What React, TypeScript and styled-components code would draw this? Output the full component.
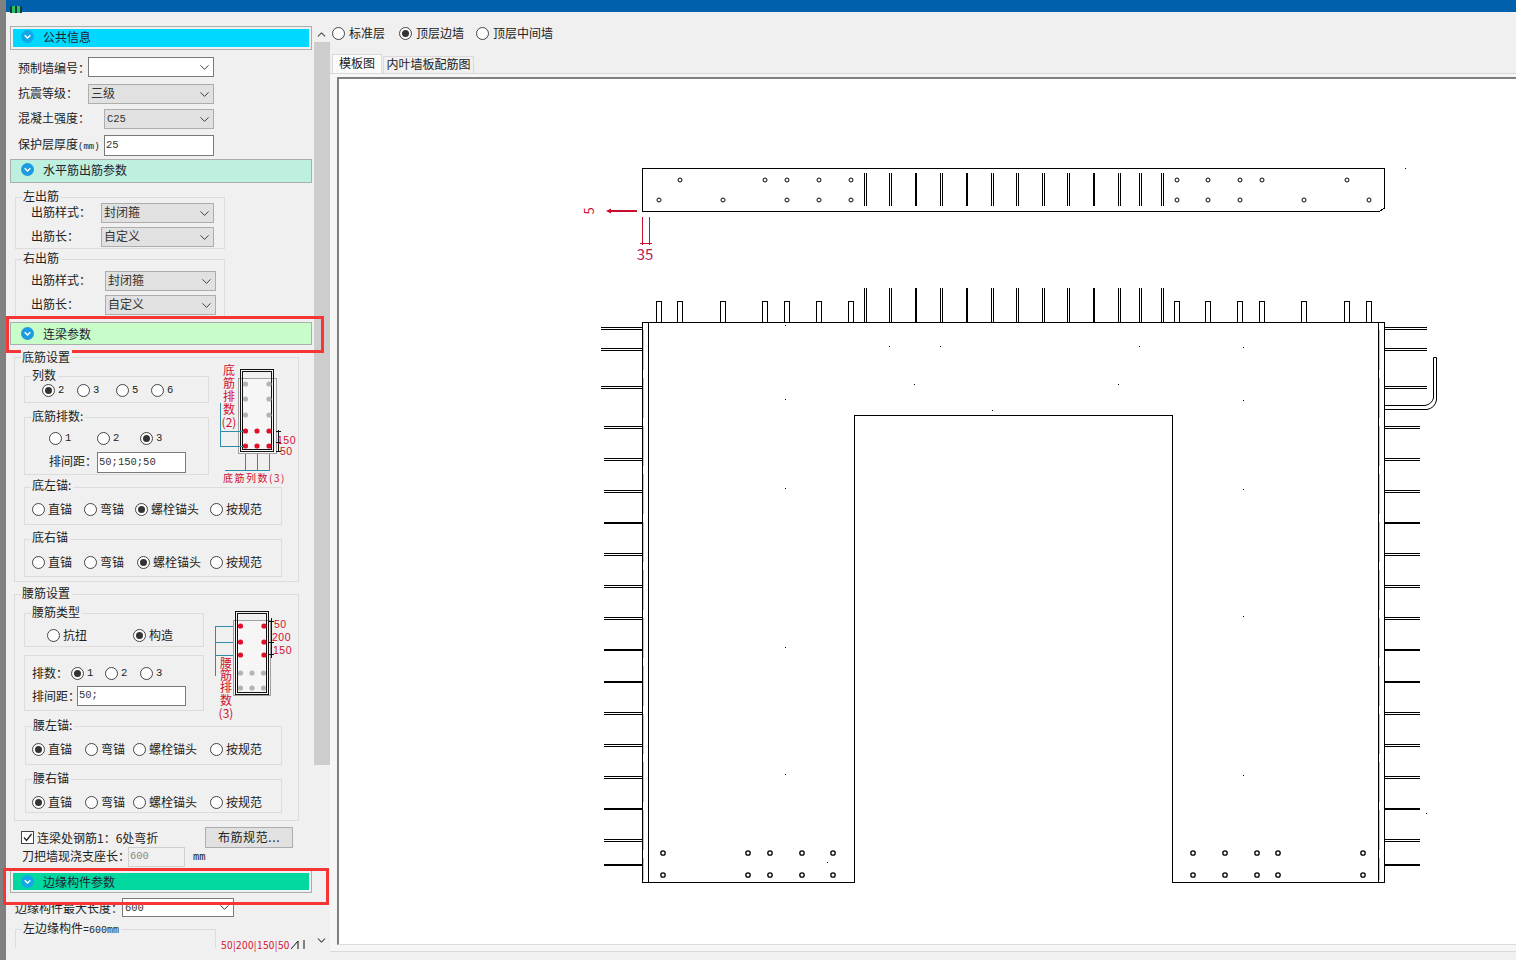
import React from 'react'
import styled, { createGlobalStyle } from 'styled-components'
import { ChevronDown, ChevronUp } from 'lucide-react'

const GlobalStyle = createGlobalStyle`
  html, body { margin: 0; padding: 0; background: #f0f0f0; }
  body { font-family: "Noto Sans CJK SC", "Liberation Sans", sans-serif; font-size: 12px; color: #222; }
`

const Page = styled.div`
  width: 1516px;
  height: 960px;
  overflow: hidden;
  display: flex;
  flex-direction: column;
`
const TitleBar = styled.div`
  height: 12px;
  flex: none;
  background: #0060ac;
  padding-left: 10px;
  box-sizing: border-box;
`
const Main = styled.div`
  flex: 1;
  display: flex;
  min-height: 0;
`
const LeftEdge = styled.div`
  width: 6px;
  flex: none;
  background: #808080;
  margin-top: -12px;
`
const Side = styled.div`
  width: 308px;
  height: 938px;
  flex: none;
  padding-top: 14px;
  box-sizing: border-box;
`
const Scroll = styled.div`
  width: 16px;
  flex: none;
  margin-top: 14px;
  height: 922px;
  display: flex;
  flex-direction: column;
  align-items: center;
  color: #505050;
`
const ScrollButton = styled.div`
  height: 16px;
  flex: none;
  display: flex;
  align-items: center;
  justify-content: center;
  padding-right: 2px;
`
const ScrollThumb = styled.div`
  width: 16px;
  height: 723px;
  flex: none;
  background: #cdcdcd;
`
const ScrollRest = styled.div`
  flex: 1;
`

const Header = styled.div<{ $gap?: boolean; $top?: number; $h?: number }>`
  position: relative;
  height: ${p => p.$h ?? 23}px;
  margin: ${p => p.$top ?? 0}px 2px 0 4px;
  box-sizing: border-box;
  border: 1px solid #a9afaf;
  padding: ${p => (p.$gap ? '2px' : '0')};
`
const HeaderBody = styled.div<{ $fill: string; $gap?: boolean; $lift?: number }>`
  height: 100%;
  box-sizing: border-box;
  background: ${p => p.$fill};
  display: flex;
  align-items: center;
  gap: 9px;
  padding-left: ${p => (p.$gap ? 8 : 10)}px;
  padding-bottom: ${p => p.$lift ?? 0}px;
  color: #223;
`
const HeaderIcon = styled.svg`
  width: 13px;
  height: 13px;
  flex: none;
`
const RedBox = styled.div<{ $l: number; $r: number; $t: number; $b: number }>`
  position: absolute;
  left: ${p => p.$l}px;
  right: ${p => p.$r}px;
  top: ${p => p.$t}px;
  bottom: ${p => p.$b}px;
  border: 3px solid #f73535;
  pointer-events: none;
`

const Field = styled.div<{ $top?: number; $left?: number; $h?: number }>`
  display: flex;
  align-items: center;
  height: ${p => p.$h ?? 20}px;
  margin-top: ${p => p.$top ?? 0}px;
  padding-left: ${p => p.$left ?? 0}px;
`
const Label = styled.div<{ $w: number; $lift?: number }>`
  width: ${p => p.$w}px;
  flex: none;
  white-space: nowrap;
  padding-bottom: ${p => (p.$lift ?? 2) * 2}px;
`
const SmallUnit = styled.span<{ $size?: number }>`
  font-family: "Liberation Mono", monospace;
  font-size: ${p => p.$size ?? 9}px;
`
const SelectBox = styled.div<{ $w: number; $h?: number; $white?: boolean }>`
  width: ${p => p.$w}px;
  height: ${p => p.$h ?? 20}px;
  flex: none;
  box-sizing: border-box;
  border: 1px solid ${p => (p.$white ? '#7a7a7a' : '#adadad')};
  background: ${p => (p.$white ? '#fff' : '#e1e1e1')};
  display: flex;
  align-items: center;
  justify-content: space-between;
  padding: 0 1px 0 2px;
  color: #333;
`
const SelectText = styled.span`
  padding-bottom: 2px;
  line-height: 16px;
`
const LatinValue = styled.span`
  font-family: "Liberation Mono", monospace;
  font-size: 10.5px;
`
const TextInput = styled.div<{ $w: number; $h?: number; $disabled?: boolean }>`
  width: ${p => p.$w}px;
  height: ${p => p.$h ?? 20}px;
  flex: none;
  box-sizing: border-box;
  border: 1px solid ${p => (p.$disabled ? '#d0d0d0' : '#7a7a7a')};
  background: ${p => (p.$disabled ? '#f0f0f0' : '#fff')};
  color: ${p => (p.$disabled ? '#8a8a8a' : '#333')};
  display: flex;
  align-items: center;
  padding: 0 0 2px 1px;
  font-family: "Liberation Mono", monospace;
  font-size: 10.5px;
`

const Group = styled.div<{ $top: number; $left: number; $w: number; $h: number; $pad?: number; $padLeft?: number; $open?: boolean }>`
  position: relative;
  margin-top: ${p => p.$top}px;
  margin-left: ${p => p.$left}px;
  width: ${p => p.$w}px;
  height: ${p => p.$h}px;
  flex: none;
  box-sizing: border-box;
  border: 1px solid #dcdcdc;
  border-bottom-width: ${p => (p.$open ? 0 : 1)}px;
  padding-top: ${p => p.$pad ?? 0}px;
  padding-left: ${p => p.$padLeft ?? 0}px;
`
const Legend = styled.div<{ $up?: number }>`
  position: absolute;
  left: 6px;
  top: -${p => p.$up ?? 10}px;
  padding: 0 2px 0 1px;
  background: #f0f0f0;
  line-height: 16px;
  height: 15px;
  white-space: nowrap;
`
const RadioRow = styled.div<{ $cols: string; $left?: number; $top?: number }>`
  display: grid;
  grid-template-columns: ${p => p.$cols};
  padding-left: ${p => p.$left ?? 0}px;
  margin-top: ${p => p.$top ?? 0}px;
  height: 14px;
  align-items: center;
`
const RadioLabel = styled.div<{ $gap?: number }>`
  display: flex;
  align-items: center;
  gap: ${p => p.$gap ?? 3}px;
  white-space: nowrap;
  line-height: 14px;
`
const RadioCircle = styled.span<{ $on?: boolean }>`
  width: 13px;
  height: 13px;
  flex: none;
  box-sizing: border-box;
  border-radius: 50%;
  border: 1px solid #444;
  background: #fff;
  display: flex;
  align-items: center;
  justify-content: center;
  &::after {
    content: '';
    display: ${p => (p.$on ? 'block' : 'none')};
    width: 7px;
    height: 7px;
    border-radius: 50%;
    background: #333;
  }
`
const Num = styled.span`
  font-family: "Liberation Mono", monospace;
  font-size: 10.5px;
`
const DiagramRow = styled.div<{ $h: number; $gap: number }>`
  display: flex;
  align-items: flex-start;
  gap: ${p => p.$gap}px;
  height: ${p => p.$h}px;
`
const FieldColumn = styled.div`
  flex: none;
`
const Diagram = styled.svg<{ $up: number }>`
  flex: none;
  margin-top: -${p => p.$up}px;
  overflow: visible;
  shape-rendering: crispEdges;
  text { shape-rendering: auto; }
`
const RedText = styled.text<{ $size?: number }>`
  fill: #d01030;
  font-size: ${p => p.$size ?? 12}px;
  font-family: "Noto Sans CJK SC", sans-serif;
`
const RedNumber = styled.text`
  fill: #d01030;
  font-size: 10.5px;
  letter-spacing: 0.5px;
  font-family: "Liberation Sans", sans-serif;
`
const RedColumn = styled(RedText)<{ $spacing: number }>`
  writing-mode: vertical-rl;
  letter-spacing: ${p => p.$spacing}px;
`
const CheckRow = styled.div`
  display: flex;
  align-items: center;
  height: 21px;
  margin-top: 6px;
  padding-left: 15px;
  width: 272px;
`
const CheckBox = styled.span`
  width: 13px;
  height: 13px;
  flex: none;
  box-sizing: border-box;
  border: 1px solid #444;
  background: #fff;
  margin-right: 3px;
  display: flex;
`
const PushButton = styled.div`
  width: 88px;
  height: 21px;
  margin-left: auto;
  box-sizing: border-box;
  border: 1px solid #adadad;
  background: #e1e1e1;
  display: flex;
  align-items: center;
  justify-content: center;
  padding-bottom: 3px;
  letter-spacing: 0.6px;
`
const BottomRow = styled.div`
  display: flex;
  align-items: flex-start;
`
const CutText = styled.div`
  color: #d01030;
  font-size: 10px;
  letter-spacing: 0.4px;
  margin-top: 20px;
  margin-left: 5px;
  display: flex;
  align-items: center;
  white-space: nowrap;
`

const Right = styled.div`
  flex: 1;
  min-width: 0;
  display: flex;
  flex-direction: column;
  height: 939px;
`
const TabBar = styled.div`
  display: flex;
  align-items: flex-end;
  height: 19px;
  margin-top: 14px;
  padding-left: 2px;
  border-bottom: 1px solid #d9d9d9;
  flex: none;
`
const Tab = styled.div<{ $active?: boolean }>`
  height: ${p => (p.$active ? 19 : 17)}px;
  width: ${p => (p.$active ? 50 : 91)}px;
  box-sizing: border-box;
  border: 1px solid #d9d9d9;
  border-bottom: none;
  margin-left: ${p => (p.$active ? 0 : 1)}px;
  background: ${p => (p.$active ? '#fbfbfb' : '#f0f0f0')};
  display: flex;
  align-items: center;
  justify-content: center;
  white-space: nowrap;
  padding-bottom: 3px;
`
const TabPane = styled.div`
  flex: none;
  height: 878px;
  box-sizing: border-box;
  padding: 3px 0 0 7px;
  background: #f6f6f6;
  border-bottom: 1px solid #d9d9d9;
`
const Canvas = styled.div`
  height: 868px;
  box-sizing: border-box;
  background: #fff;
  border-top: 2px solid #7f7f7f;
  border-left: 2px solid #7f7f7f;
  border-bottom: 1px solid #dcdcdc;
  overflow: hidden;
`
const Plan = styled.svg`
  display: block;
  shape-rendering: crispEdges;
  text { shape-rendering: auto; }
`

const Radio = ({ on, gap, children }: { on?: boolean; gap?: number; children?: React.ReactNode }) => (
  <RadioLabel $gap={gap}>
    <RadioCircle $on={on} />
    {children}
  </RadioLabel>
)

const Select = ({ w, h, white, children }: { w: number; h?: number; white?: boolean; children?: React.ReactNode }) => (
  <SelectBox $w={w} $h={h} $white={white}>
    <SelectText>{children}</SelectText>
    <ChevronDown size={15} strokeWidth={1.5} color="#333" />
  </SelectBox>
)

const Chevron = ({ color }: { color: string }) => (
  <HeaderIcon viewBox="0 0 13 13">
    <circle cx="6.5" cy="6.5" r="6.5" fill={color} />
    <path d="M3.7 5.3 L6.5 8 L9.3 5.3" fill="none" stroke="#fff" strokeWidth="1.5" />
  </HeaderIcon>
)

const AnchorGroup = ({ title, top, left, w, h, cols, pad, active, up }: {
  title: string; top: number; left: number; w: number; h: number; cols: string; pad: number; active: number; up?: number
}) => (
  <Group $top={top} $left={left} $w={w} $h={h} $pad={pad} $padLeft={6 - left + 1}>
    <Legend $up={up}>{title}</Legend>
    <RadioRow $cols={cols}>
      {['直锚', '弯锚', '螺栓锚头', '按规范'].map((t, i) => (
        <Radio key={t} on={i === active}>{t}</Radio>
      ))}
    </RadioRow>
  </Group>
)

const Dot = ({ x, y, c }: { x: number; y: number; c: string }) => (
  <circle cx={x} cy={y} r={2.6} fill={c} style={{ shapeRendering: 'auto' }} />
)

const BLUE = '#2f8ca8'
const BOT_RED = '#e0102a'

const BottomDiagram = () => (
  <Diagram $up={14} width="80" height="125" viewBox="216 362 80 125">
    <rect x="238.5" y="378.5" width="38" height="75" fill="#f6f6f6" stroke="#a0a0a0" />
    <rect x="240.5" y="369.5" width="33" height="82" fill="none" stroke="#111" />
    <rect x="242.5" y="371.5" width="29" height="78" fill="none" stroke="#111" />
    {[384, 399, 415].map(y => [245.5, 269].map(x => <Dot key={`${x}${y}`} x={x} y={y} c="#b4b4b4" />))}
    {[431, 446].map(y => [245.5, 257, 269].map(x => <Dot key={`${x}${y}`} x={x} y={y} c={BOT_RED} />))}
    <path d="M220.5 403V446.5H243M220.5 431.5H243M245.5 454V470.5M257.5 454V470.5M269.5 454V470.5M225 470.5H270" fill="none" stroke={BLUE} />
    <path d="M278.5 430V452M276 431H281M276 442H281M276 451H281" fill="none" stroke="#111" />
    <RedColumn x={229} y={364} $spacing={1}>底筋排数</RedColumn>
    <RedText x={229} y={427} textAnchor="middle">(2)</RedText>
    <RedNumber x={277} y={444}>150</RedNumber>
    <RedNumber x={280} y={455}>50</RedNumber>
    <RedText x={223} y={482} $size={10} letterSpacing="1.5">底筋列数(3)</RedText>
  </Diagram>
)

const WaistDiagram = () => (
  <Diagram $up={7} width="80" height="115" viewBox="213 606 80 115">
    <rect x="233.5" y="620.5" width="37" height="75" fill="#f6f6f6" stroke="#a0a0a0" />
    <rect x="235.5" y="611.5" width="33" height="83" fill="none" stroke="#111" />
    <rect x="237.5" y="613.5" width="29" height="79" fill="none" stroke="#111" />
    {[626, 642, 655].map(y => [240.5, 264].map(x => <Dot key={`${x}${y}`} x={x} y={y} c={BOT_RED} />))}
    {[673, 688].map(y => [240.5, 252, 263.5].map(x => <Dot key={`${x}${y}`} x={x} y={y} c="#b4b4b4" />))}
    <path d="M215.5 626V676M215.5 626.5H233M215.5 642.5H233M215.5 655.5H233" fill="none" stroke={BLUE} />
    <path d="M271.5 618V658M269 621H274M269 642H274M269 654H274" fill="none" stroke="#111" />
    <RedNumber x={274} y={628}>50</RedNumber>
    <RedNumber x={272} y={641}>200</RedNumber>
    <RedNumber x={273} y={654}>150</RedNumber>
    <RedColumn x={226} y={657} $spacing={0.4}>腰筋排数</RedColumn>
    <RedText x={226} y={718} textAnchor="middle">(3)</RedText>
  </Diagram>
)

const BAR_TOP_A = [659, 680, 723, 765, 787, 819, 851]
const BAR_TOP_B = [1177, 1208, 1240, 1262, 1304, 1347, 1369]
const BAR_MID = [865, 890, 916, 941, 967, 992, 1017, 1043, 1068, 1094, 1119, 1140, 1162]
const THICK_MID = [916, 967, 1094]
const PLATE_HOLES: [number, number][] = [
  ...[680, 765, 787, 819, 851, 1177, 1208, 1240, 1262, 1347].map((x): [number, number] => [x, 180]),
  ...[659, 723, 787, 819, 851, 1177, 1208, 1240, 1304, 1369].map((x): [number, number] => [x, 200]),
]
const WALL_HOLES: [number, number][] = [663, 748, 770, 802, 833, 1193, 1225, 1257, 1278, 1363].flatMap(
  (x): [number, number][] => [[x, 853], [x, 875]],
)
const SIDE_BARS = [328, 349, 387, 427, 459, 491, 523, 554, 586, 618, 650, 682, 713, 745, 777, 809, 840, 865]
const THICK_BARS = [523, 650, 682, 809, 865]
const SPECKS: [number, number][] = [
  [785, 325], [889, 346], [940, 346], [1139, 346], [1243, 347], [914, 384], [1118, 384], [785, 399],
  [1243, 400], [992, 410], [785, 488], [1243, 489], [785, 647], [1243, 616], [785, 774], [1243, 775],
  [1405, 168], [1426, 813], [827, 862],
]

const WallPlan = () => (
  <Plan width="1177" height="865" viewBox="339 79 1177 865">
    {/* top plate */}
    <path d="M642.5 168.5H1384.5V208L1380 211H642.5Z" fill="none" stroke="#000" />
    {BAR_MID.map(x => (
      THICK_MID.includes(x)
        ? <path key={x} d={`M${x} 173V206`} stroke="#000" strokeWidth="2" />
        : <path key={x} d={`M${x - 1}.5 173V206M${x + 1}.5 173V206`} stroke="#000" />
    ))}
    {PLATE_HOLES.map(([x, y], i) => <circle key={i} cx={x} cy={y} r="2" fill="#fff" stroke="#000" style={{ shapeRendering: 'auto' }} />)}
    {/* dimensions */}
    <path d="M610 211H637" stroke="#c8102e" strokeWidth="2" />
    <path d="M606 211L611 208.5V213.5Z" fill="#c8102e" style={{ shapeRendering: 'auto' }} />
    <path d="M642.5 217V245M649.5 217V245M640 243.5H652" stroke="#c8102e" fill="none" />
    <RedText x={590} y={211} $size={13} textAnchor="middle" dominantBaseline="middle" transform="rotate(-90 590 211)">5</RedText>
    <RedText x={645} y={260} $size={15} textAnchor="middle" style={{ fill: '#b8204a' }}>35</RedText>
    {/* wall */}
    <path d="M642.5 322.5H1384.5V882.5H1172.5V415.5H854.5V882.5H642.5Z" fill="none" stroke="#000" />
    <path d="M648.5 322V882M1378.5 322V882" stroke="#000" />
    <path d="M643.5 330V880M1379.5 330V880" stroke="#c4c4c4" strokeDasharray="40 8" />
    {[...BAR_TOP_A, ...BAR_TOP_B].map(x => (
      <path key={x} d={`M${x - 3}.5 322V301.5H${x + 2}.5V322`} fill="none" stroke="#000" />
    ))}
    {BAR_MID.map(x => (
      THICK_MID.includes(x)
        ? <path key={x} d={`M${x} 288V322`} stroke="#000" strokeWidth="2" />
        : <path key={x} d={`M${x - 1}.5 288V322M${x + 1}.5 288V322`} stroke="#000" />
    ))}
    {SIDE_BARS.map(y => (
      THICK_BARS.includes(y)
        ? <path key={y} d={`M604 ${y}H642M1384 ${y}H1420`} stroke="#000" strokeWidth="2" />
        : <path key={y} d={`M${y < 390 ? 601 : 604} ${y - 1}.5H642M${y < 390 ? 601 : 604} ${y + 1}.5H642M1384 ${y - 1}.5H${y < 410 ? 1427 : 1420}M1384 ${y + 1}.5H${y < 410 ? 1427 : 1420}`} stroke="#000" />
    ))}
    <path d="M1384 405.5H1425Q1432 404 1433.5 398V357.5H1436.5V400Q1435 408 1427 409.5H1384" fill="none" stroke="#000" style={{ shapeRendering: 'auto' }} />
    {WALL_HOLES.map(([x, y], i) => <circle key={i} cx={x} cy={y} r="2.2" fill="#fff" stroke="#000" strokeWidth="1.3" style={{ shapeRendering: 'auto' }} />)}
    {SPECKS.map(([x, y], i) => <rect key={i} x={x} y={y} width="1" height="1" fill="#000" />)}
  </Plan>
)

export default function App() {
  return (
    <Page>
      <GlobalStyle />
      <TitleBar>
        <svg width="12" height="8" viewBox="0 0 12 8">
          <rect x="0" y="0" width="12" height="7" fill="#0b3d3a" />
          <rect x="2" y="0" width="3" height="7" fill="#27c46a" />
          <rect x="7" y="0" width="3" height="7" fill="#27c46a" />
        </svg>
      </TitleBar>
      <Main>
        <LeftEdge />
        <Side>
          <Header $gap $h={24}>
            <HeaderBody $fill="#00d8ff" $gap $lift={4}>
              <Chevron color="#10a8e8" />
              公共信息
            </HeaderBody>
          </Header>
          <Field $top={7} $left={12}>
            <Label $w={70} $lift={0}>预制墙编号：</Label>
            <Select w={126} white />
          </Field>
          <Field $top={7} $left={12}>
            <Label $w={70}>抗震等级：</Label>
            <Select w={126}>三级</Select>
          </Field>
          <Field $top={5} $left={12}>
            <Label $w={86}>混凝土强度：</Label>
            <Select w={110}><LatinValue>C25</LatinValue></Select>
          </Field>
          <Field $top={6} $left={12} $h={21}>
            <Label $w={86}>保护层厚度<SmallUnit>(mm)</SmallUnit></Label>
            <TextInput $w={110} $h={21}>25</TextInput>
          </Field>
          <Header $top={3} $h={24}>
            <HeaderBody $fill="#bdf0de" $lift={4}>
              <Chevron color="#1c9be0" />
              水平筋出筋参数
            </HeaderBody>
          </Header>

          <Group $top={14} $left={9} $w={210} $h={52} $pad={5}>
            <Legend>左出筋</Legend>
            <Field $left={15}>
              <Label $w={70}>出筋样式：</Label>
              <Select w={113}>封闭箍</Select>
            </Field>
            <Field $top={4} $left={15}>
              <Label $w={70}>出筋长：</Label>
              <Select w={113}>自定义</Select>
            </Field>
          </Group>
          <Group $top={10} $left={9} $w={210} $h={59} $pad={11}>
            <Legend>右出筋</Legend>
            <Field $left={15}>
              <Label $w={74}>出筋样式：</Label>
              <Select w={111}>封闭箍</Select>
            </Field>
            <Field $top={4} $left={15}>
              <Label $w={74}>出筋长：</Label>
              <Select w={111}>自定义</Select>
            </Field>
          </Group>

          <Header $top={4}>
            <HeaderBody $fill="#c8fcc8" $lift={1}>
              <Chevron color="#1c9be0" />
              连梁参数
            </HeaderBody>
            <RedBox $l={-5} $r={-13} $t={-7} $b={-9} />
          </Header>

          <Group $top={12} $left={8} $w={285} $h={225} $pad={18} $padLeft={9}>
            <Legend $up={9}>底筋设置</Legend>
            <DiagramRow $h={99} $gap={7}>
              <FieldColumn>
                <Group $top={0} $left={0} $w={185} $h={27} $pad={6} $padLeft={17}>
                  <Legend>列数</Legend>
                  <RadioRow $cols="35px 39px 35px auto">
                    <Radio on><Num>2</Num></Radio>
                    <Radio><Num>3</Num></Radio>
                    <Radio><Num>5</Num></Radio>
                    <Radio><Num>6</Num></Radio>
                  </RadioRow>
                </Group>
                <Group $top={14} $left={0} $w={185} $h={58} $pad={13} $padLeft={24}>
                  <Legend>底筋排数:</Legend>
                  <RadioRow $cols="48px 43px auto">
                    <Radio><Num>1</Num></Radio>
                    <Radio><Num>2</Num></Radio>
                    <Radio on><Num>3</Num></Radio>
                  </RadioRow>
                  <Field $top={7} $h={21}>
                    <Label $w={48}>排间距：</Label>
                    <TextInput $w={89} $h={21}>50;150;50</TextInput>
                  </Field>
                </Group>
              </FieldColumn>
              <BottomDiagram />
            </DiagramRow>
            <AnchorGroup title="底左锚:" top={12} left={0} w={258} h={38} cols="52px 51px 75px auto" pad={14} active={2} up={11} />
            <AnchorGroup title="底右锚" top={14} left={0} w={258} h={38} cols="52px 53px 73px auto" pad={15} active={2} up={11} />
          </Group>

          <Group $top={12} $left={8} $w={285} $h={227} $pad={18} $padLeft={9}>
            <Legend>腰筋设置</Legend>
            <DiagramRow $h={98} $gap={9}>
              <FieldColumn>
                <Group $top={0} $left={0} $w={180} $h={34} $pad={14} $padLeft={22}>
                  <Legend>腰筋类型</Legend>
                  <RadioRow $cols="86px auto">
                    <Radio>抗扭</Radio>
                    <Radio on>构造</Radio>
                  </RadioRow>
                </Group>
                <Group $top={8} $left={0} $w={180} $h={56} $pad={10} $padLeft={7}>
                  <Field $h={14}>
                    <Label $w={39} $lift={1}>排数：</Label>
                    <RadioRow $cols="34px 35px auto">
                      <Radio on><Num>1</Num></Radio>
                      <Radio><Num>2</Num></Radio>
                      <Radio><Num>3</Num></Radio>
                    </RadioRow>
                  </Field>
                  <Field $top={6}>
                    <Label $w={45} $lift={1}>排间距：</Label>
                    <TextInput $w={109}>50;</TextInput>
                  </Field>
                </Group>
              </FieldColumn>
              <WaistDiagram />
            </DiagramRow>
            <AnchorGroup title="腰左锚:" top={15} left={1} w={257} h={39} cols="53px 48px 77px auto" pad={15} active={0} />
            <AnchorGroup title="腰右锚" top={14} left={1} w={257} h={34} cols="53px 48px 77px auto" pad={15} active={0} />
          </Group>

          <CheckRow>
            <CheckBox>
              <svg width="11" height="11" viewBox="0 0 11 11">
                <path d="M2 5.5 L4.5 8.5 L9.5 2" fill="none" stroke="#222" strokeWidth="1.3" />
              </svg>
            </CheckBox>
            连梁处钢筋1：6处弯折
            <PushButton>布筋规范...</PushButton>
          </CheckRow>
          <Field $top={-1} $left={16}>
            <Label $w={106}>刀把墙现浇支座长：</Label>
            <TextInput $w={57} $disabled>600</TextInput>
            <Num style={{ marginLeft: 8 }}>mm</Num>
          </Field>
          <Header $gap $top={3}>
            <HeaderBody $fill="#00d8a0" $gap $lift={1}>
              <Chevron color="#10a8e8" />
              边缘构件参数
            </HeaderBody>
            <RedBox $l={-8} $r={-18} $t={-3} $b={-13} />
          </Header>
          <Field $top={5} $left={9} $h={19}>
            <Label $w={107} $lift={0}>边缘构件最大长度：</Label>
            <Select w={112} h={19} white><LatinValue>600</LatinValue></Select>
          </Field>
          <BottomRow>
            <Group $top={12} $left={9} $w={201} $h={19} $open>
              <Legend>左边缘构件<SmallUnit $size={10}>=600mm</SmallUnit></Legend>
            </Group>
            <CutText>
              50|200|150|50
              <svg width="16" height="10" viewBox="0 0 16 10" style={{ marginLeft: 1 }}>
                <path d="M0 9L7 1V9M13 0V9" fill="none" stroke="#111" />
              </svg>
            </CutText>
          </BottomRow>
        </Side>
        <Scroll>
          <ScrollButton><ChevronUp size={13} strokeWidth={2} /></ScrollButton>
          <ScrollThumb />
          <ScrollRest />
          <ScrollButton><ChevronDown size={13} strokeWidth={2} /></ScrollButton>
        </Scroll>
        <Right>
          <RadioRow $cols="67px 77px auto" $left={2} $top={14}>
            <Radio gap={4}>标准层</Radio>
            <Radio on gap={4}>顶层边墙</Radio>
            <Radio gap={4}>顶层中间墙</Radio>
          </RadioRow>
          <TabBar>
            <Tab $active>模板图</Tab>
            <Tab>内叶墙板配筋图</Tab>
          </TabBar>
          <TabPane>
            <Canvas>
              <WallPlan />
            </Canvas>
          </TabPane>
        </Right>
      </Main>
    </Page>
  )
}
